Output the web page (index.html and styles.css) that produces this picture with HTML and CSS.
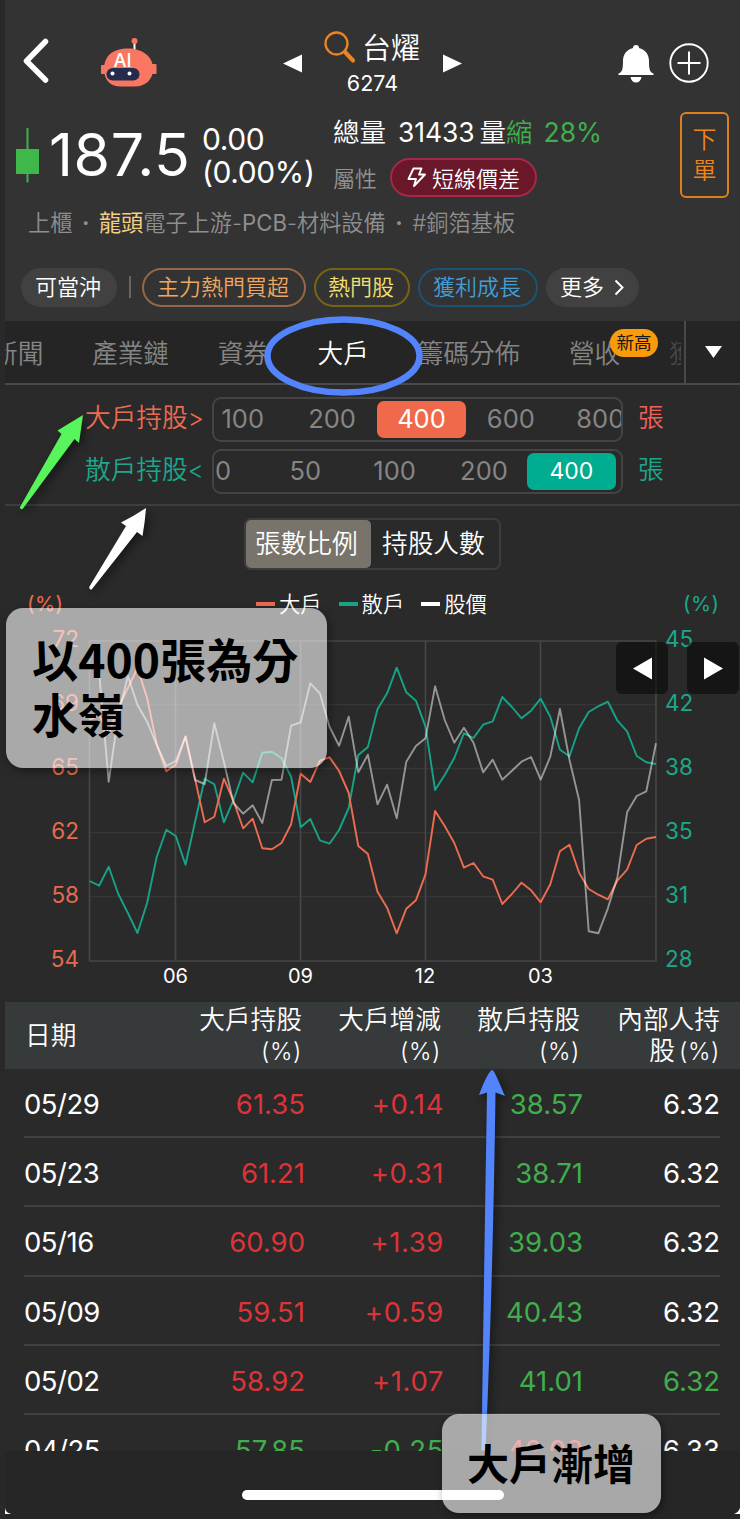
FILE: index.html
```
<!DOCTYPE html>
<html lang="zh-Hant">
<head>
<meta charset="utf-8">
<title>台燿 6274</title>
<link rel="stylesheet" href="styles.css">
</head>
<body>
<div class="screen">
  <header class="top">
    <nav class="topbar">
      <svg class="back" width="27" height="45" viewBox="0 0 27 45"><path d="M22.500 3.500 3.500 23 22.500 42" fill="none" stroke="#fff" stroke-width="5.500" stroke-linecap="round" stroke-linejoin="round"/></svg>
      <svg class="robot" width="56" height="50" viewBox="0 0 56 50">
        <path d="M33.500 3v9" stroke="#fff" stroke-width="2"/><circle cx="33.500" cy="3" r="3" fill="#f97762"/>
        <rect x="0" y="27" width="5" height="9" rx="1" fill="#f97762"/><rect x="50" y="26" width="5.500" height="10" rx="1" fill="#f97762"/>
        <path d="M3 31C3 17 13 10.500 27 10.500S52 18 52 31c0 11-8 17.500-18 17.500H20C10 48.500 3 43 3 31Z" fill="#f97762"/>
        <rect x="5.500" y="30" width="33" height="12.500" rx="6.200" fill="#252b4d"/><circle cx="11.500" cy="35.500" r="2" fill="#fff"/><circle cx="28.500" cy="35.500" r="2" fill="#fff"/>
        <text x="12.500" y="29" class="robot-ai">AI</text>
      </svg>
      <svg class="prev" width="19" height="19" viewBox="0 0 19 19"><path d="M0 9.500 19 .5v18Z" fill="#fff"/></svg>
      <div class="title">
        <div class="title-name"><svg width="32" height="33" viewBox="0 0 32 33"><circle cx="12.500" cy="12.500" r="11" fill="none" stroke="#ee8420" stroke-width="2.300"/><path d="m21 21 8 8.500" stroke="#ee8420" stroke-width="4.200" stroke-linecap="round"/></svg><span>台燿</span></div>
        <div class="title-code">6274</div>
      </div>
      <svg class="next" width="19" height="19" viewBox="0 0 19 19"><path d="M19 9.500 0 .5v18Z" fill="#fff"/></svg>
      <svg class="bell" width="36" height="40" viewBox="0 0 36 40"><path d="M15 4a3 3 0 0 1 6 0c6 1.500 10 6 10 13 0 7 .5 11.500 4.500 12.500V31H.5v-1.500C4.500 28.500 5 24 5 17 5 10 9 5.500 15 4ZM12.500 33h11c-.5 3.500-2.500 5.500-5.500 5.500s-5-2-5.500-5.500Z" fill="#fff"/></svg>
      <svg class="plus" width="40" height="40" viewBox="0 0 40 40"><circle cx="20" cy="20" r="18.700" fill="none" stroke="#fff" stroke-width="1.900"/><path d="M8.500 20h23M20 8.500v23" stroke="#fff" stroke-width="2"/></svg>
    </nav>
    <section class="quote">
      <svg class="candle" width="23" height="55" viewBox="0 0 23 55"><path d="M11.500 0v54.500" stroke="#3fb34b" stroke-width="2"/><path d="M0 21h23v25H0Z" fill="#3fb74b"/></svg>
      <div class="price">187.5</div>
      <div class="change"><div>0.00</div><div>(0.00%)</div></div>
      <div class="volume">
        <div class="volume-line"><span>總量</span><span class="vol-num">31433</span><span>量</span><span class="green">縮</span><span class="vol-pct green">28%</span></div>
        <div class="attr"><span class="attr-label">屬性</span><span class="attr-pill"><svg width="20" height="21" viewBox="0 0 20 21"><path d="M6.500 1.500h8l-2.500 6h6L7 19l2-7H1.500Z" fill="none" stroke="#fff" stroke-width="1.900" stroke-linejoin="round"/></svg>短線價差</span></div>
      </div>
      <button class="order"><span>下</span><span>單</span></button>
    </section>
    <div class="industry">上櫃<i>·</i><b>龍頭</b>電子上游-<span class="latin">PCB</span>-材料設備<i>·</i>#銅箔基板</div>
    <div class="tags">
      <span class="tag solid w96">可當沖</span><span class="bar"></span>
      <span class="tag orange">主力熱門買超</span><span class="tag yellow">熱門股</span><span class="tag blue">獲利成長</span>
      <span class="tag solid more">更多<svg width="10" height="17" viewBox="0 0 10 17"><path d="m1.500 1.500 7 7-7 7" fill="none" stroke="#fff" stroke-width="2"/></svg></span>
    </div>
  </header>

  <nav class="tabs">
    <div class="tab-scroll"><span>新聞</span><span>產業鏈</span><span>資券</span><span class="on">大戶</span><span>籌碼分佈</span><span class="has-badge">營收<em>新高</em></span><span class="faded">獲</span></div>
    <div class="tab-more"><svg width="17" height="12" viewBox="0 0 17 12"><path d="M0 0h17L8.500 12Z" fill="#fff"/></svg></div>
  </nav>

  <section class="filters">
    <div class="filter"><span class="filter-label big">大戶持股<i>&gt;</i></span><div class="options first"><span>100</span><span>200</span><span class="sel big-bg">400</span><span>600</span><span>800</span></div><span class="unit red">張</span></div>
    <div class="filter"><span class="filter-label teal">散戶持股<i>&lt;</i></span><div class="options second"><span>10</span><span>50</span><span>100</span><span>200</span><span class="sel teal-bg">400</span></div><span class="unit teal">張</span></div>
  </section>

  <section class="chart">
    <div class="toggle"><span class="active">張數比例</span><span>持股人數</span></div>
    <div class="legend"><span class="pct big">(%)</span><div class="keys"><span class="key k-big">大戶</span><span class="key k-small">散戶</span><span class="key k-price">股價</span></div><span class="pct teal">(%)</span></div>
    <svg class="plot" width="735" height="382" viewBox="5 620 735 382">
      <g class="grid">
        <path d="M89.500 704.500H656M89.500 768.500H656M89.500 832.500H656M89.500 896.500H656" class="minor"/>
        <path d="M89.500 641H656V961H89.500ZM175.500 641V961M300.500 641V961M425.500 641V961M540.500 641V961"/>
      </g>
      <g class="axis-big"><text x="79" y="646.500">72</text><text x="79" y="710.500">69</text><text x="79" y="774.500">65</text><text x="79" y="838.500">62</text><text x="79" y="902.500">58</text><text x="79" y="966.500">54</text></g>
      <g class="axis-small"><text x="665" y="646.500">45</text><text x="665" y="710.500">42</text><text x="665" y="774.500">38</text><text x="665" y="838.500">35</text><text x="665" y="902.500">31</text><text x="665" y="966.500">28</text></g>
      <g class="axis-x"><text x="175.500" y="982.500">06</text><text x="300.500" y="982.500">09</text><text x="425" y="982.500">12</text><text x="540.500" y="982.500">03</text></g>
      <g fill="none" stroke-width="1.900" stroke-linejoin="round">
        <polyline stroke="#17a387" points="89.500,881 99.100,885.700 108.700,866.700 118.300,894 127.900,913 137.500,933 147.100,903 156.700,857 166.300,829.700 175.900,836.300 185.500,864.700 195.100,821.700 204.700,778.700 214.300,784.300 223.900,822.300 233.500,800 243.100,772.700 252.700,782.300 262.300,752.700 271.900,751.700 281.500,758 291.100,776.700 300.700,827.300 310.300,819 319.900,840.300 329.500,843.700 339.100,830 348.700,808 358.300,755 367.900,747 377.500,709.300 387.100,693.300 396.700,667.700 406.300,692.300 415.900,700.700 425.500,726.700 435.100,790 444.700,775 454.300,758 463.900,733.300 473.500,738 483.100,724.700 492.700,721.300 502.300,697 511.900,707 521.500,718.300 531.100,710.700 540.700,698.700 550.300,716.700 559.900,749.700 569.500,756.300 579.100,728.300 588.700,712 598.300,706.300 607.900,701.700 617.500,720.700 627.100,731.300 636.700,756 646.300,762.300 656,764"/>
        <polyline stroke="#ec6c50" transform="matrix(1 0 0 -1 0 1601)" points="89.500,881 99.100,885.700 108.700,866.700 118.300,894 127.900,913 137.500,933 147.100,903 156.700,857 166.300,829.700 175.900,836.300 185.500,864.700 195.100,821.700 204.700,778.700 214.300,784.300 223.900,822.300 233.500,800 243.100,772.700 252.700,782.300 262.300,752.700 271.900,751.700 281.500,758 291.100,776.700 300.700,827.300 310.300,819 319.900,840.300 329.500,843.700 339.100,830 348.700,808 358.300,755 367.900,747 377.500,709.300 387.100,693.300 396.700,667.700 406.300,692.300 415.900,700.700 425.500,726.700 435.100,790 444.700,775 454.300,758 463.900,733.300 473.500,738 483.100,724.700 492.700,721.300 502.300,697 511.900,707 521.500,718.300 531.100,710.700 540.700,698.700 550.300,716.700 559.900,749.700 569.500,756.300 579.100,728.300 588.700,712 598.300,706.300 607.900,701.700 617.500,720.700 627.100,731.300 636.700,756 646.300,762.300 656,764"/>
        <polyline stroke="#fff" stroke-opacity=".5" points="89.500,665 99.100,672 108.700,781.700 118.300,715 127.900,676 137.500,705 147.100,721.700 156.700,745 166.300,766 175.900,761 185.500,736.700 195.100,780 204.700,784 214.300,723.300 223.900,762 233.500,803 243.100,813.700 252.700,805.300 262.300,823 271.900,780 281.500,779.700 291.100,725.700 300.700,722.300 310.300,683.300 319.900,693.300 329.500,726.700 339.100,745.700 348.700,716.700 358.300,772.300 367.900,754.700 377.500,804.300 387.100,784.700 396.700,818.300 406.300,761.700 415.900,746 425.500,738.300 435.100,686.300 444.700,720 454.300,742.700 463.900,727.700 473.500,742.700 483.100,772.300 492.700,759.700 502.300,779.700 511.900,770.700 521.500,761.700 531.100,757 540.700,779.700 550.300,756.700 559.900,709 569.500,760 579.100,800 588.700,931.300 598.300,933.300 607.900,908.300 617.500,876.700 627.100,812.300 636.700,796 646.300,791.300 656,743.300"/>
      </g>
    </svg>
    <div class="pan"><span><svg width="19" height="23" viewBox="0 0 19 23"><path d="M0 11.500 19 .5v22Z" fill="#fff"/></svg></span><span><svg width="19" height="23" viewBox="0 0 19 23"><path d="M19 11.500 0 .5v22Z" fill="#fff"/></svg></span></div>
  </section>

  <section class="table">
    <div class="thead"><span class="date">日期</span><span>大戶持股<br><u>(%)</u></span><span>大戶增減<br><u>(%)</u></span><span>散戶持股<br><u>(%)</u></span><span>內部人持<br>股<u>(%)</u></span></div>
    <div class="rows">
      <div class="row"><span>05/29</span><span class="up">61.35</span><span class="up">+0.14</span><span class="down">38.57</span><span>6.32</span></div>
      <div class="row"><span>05/23</span><span class="up">61.21</span><span class="up">+0.31</span><span class="down">38.71</span><span>6.32</span></div>
      <div class="row"><span>05/16</span><span class="up">60.90</span><span class="up">+1.39</span><span class="down">39.03</span><span>6.32</span></div>
      <div class="row"><span>05/09</span><span class="up">59.51</span><span class="up">+0.59</span><span class="down">40.43</span><span>6.32</span></div>
      <div class="row"><span>05/02</span><span class="up">58.92</span><span class="up">+1.07</span><span class="down">41.01</span><span class="down">6.32</span></div>
      <div class="row"><span>04/25</span><span class="down">57.85</span><span class="down">-0.25</span><span class="up">42.08</span><span>6.33</span></div>
    </div>
  </section>
  <footer class="home"><span></span></footer>
</div>

<svg class="marks" width="740" height="1519" viewBox="0 0 740 1519">
  <ellipse cx="343.500" cy="356" rx="76" ry="36.500" fill="none" stroke="#5384fb" stroke-width="6.500"/>
  <path class="mark" d="M20 507 61.500 434 57.500 430.500 83 415 79 443 74.500 439 23 508.500C22 510 19.500 509 20 507Z" fill="#57f45b"/>
  <path class="mark" d="M89.500 586.500 126 526 121 522.500Q134 516 146 508Q145 522 142.500 536L137 532 92 589C91 590.500 88.500 588.500 89.500 586.500Z" fill="#fff"/>
  <path class="mark" d="M492 1070C494 1070 497 1077 505 1096L495.500 1092.500Q493 1280 485.500 1450.500H481.500Q484 1270 487 1092.500L479 1095C485 1079 490 1070 492 1070Z" fill="#5384fb"/>
  <path d="M5 1508V1514H11.500C8 1513.500 5.500 1511.500 5 1508ZM740 1508V1514H734C737 1513 739 1511 740 1508Z" fill="#fff"/>
</svg>
<div class="note note-a">以400張為分<br>水嶺</div>
<div class="note note-b">大戶漸增</div>
</body>
</html>
```
FILE: styles.css
```
* { box-sizing: border-box; }
body { margin: 0; width: 740px; height: 1519px; position: relative; overflow: hidden; background: #292929; color: #fff; font-family: Inter, "Noto Sans CJK TC", sans-serif; font-weight: 350; white-space: nowrap; }
svg { display: block; flex: none; }
i, em, b, u { font-style: normal; text-decoration: none; }
.screen { margin-left: 5px; width: 735px; height: 1519px; background: #2a2a2a; overflow: hidden; }
.green { color: #3fae4c; }
.big { color: #ee6b4f; }
.teal { color: #1ca78b; }
.red { color: #f06059; }

.top { height: 321px; background: #333; }
.topbar { height: 110px; display: flex; align-items: flex-start; }
.back { margin: 38px 0 0 18px; }
.robot { margin: 38px 0 0 51px; overflow: visible; }
.robot-ai { fill: #fff; font: 500 18.500px Inter, sans-serif; }
.prev { margin: 54px 0 0 126px; }
.title { width: 97px; margin: 28px 0 0 22px; }
.title-name { display: flex; align-items: center; height: 40px; gap: 6px; font-size: 29px; }
.title-name svg { margin-top: -2px; }
.title-name span { margin-top: -4px; }
.title-code { font-size: 21.500px; font-weight: 400; text-align: center; line-height: 30px; }
.next { margin: 54px 0 0 22px; }
.bell { margin: 44px 0 0 156px; }
.plus { margin: 43px 0 0 15px; }

.quote { height: 95px; display: flex; align-items: flex-start; }
.quote > * { flex: none; }
.candle { margin: 18px 0 0 11px; }
.price { width: 157px; padding-left: 10px; font-size: 59px; font-weight: 400; line-height: 90px; letter-spacing: .6px; }
.change { width: 137px; padding: 13px 0 0 6px; font-size: 30px; font-weight: 400; line-height: 33px; letter-spacing: -.4px; }
.volume { width: 347px; padding-top: 3px; }
.volume-line { height: 40px; line-height: 39px; display: flex; font-size: 26.500px; }
.vol-num { margin: 0 5px 0 12px; font-weight: 400; font-size: 26.500px; letter-spacing: -.1px; }
.vol-pct { margin-left: 11px; font-weight: 400; font-size: 26.500px; }
.attr { display: flex; align-items: center; height: 48px; font-size: 22px; }
.attr-label { width: 57px; color: #919191; }
.attr-pill { display: flex; align-items: center; gap: 5px; width: 147px; height: 39px; padding-left: 15px; border: 2px solid #a42848; border-radius: 20px; background: #6a1729; }
.order { width: 49px; height: 86px; margin: 2px 0 0 0; padding: 0; border: 2px solid #dc801f; border-radius: 6px; background: none; color: #f08318; font: inherit; font-size: 24px; line-height: 31px; display: flex; flex-direction: column; justify-content: center; align-items: center; }
.industry { height: 36px; padding-left: 23px; line-height: 36px; font-size: 22.200px; color: #8f8f8f; }
.industry i { display: inline-block; width: 26.500px; text-align: center; font-weight: 700; }
.industry b { color: #f2cf84; font-weight: 400; }
.industry .latin { font-weight: 400; }
.tags { display: flex; align-items: center; gap: 8px; height: 92px; padding-left: 16px; font-size: 22px; }
.tag { height: 39px; line-height: 35px; padding: 0 13px; border: 2px solid; border-radius: 20px; }
.solid { background: #414141; border-color: #414141; }
.w96 { width: 96px; padding: 0 12px; }
.bar { width: 2px; height: 22px; background: #666; margin: 0 3px 0 4px; }
.orange { width: 164px; border-color: #936747; color: #f0a65f; }
.yellow { width: 96px; padding: 0 12px; border-color: #75650f; color: #f3e06c; }
.blue { width: 120px; border-color: #1b5377; color: #439ed6; }
.more { display: flex; align-items: center; gap: 10px; width: 93px; padding: 0 12px; }

.tabs { height: 64px; display: flex; background: #252525; border-bottom: 2px solid #494949; font-size: 25.700px; color: #858585; }
.tab-scroll { width: 679px; display: flex; gap: 48.600px; overflow: hidden; line-height: 66px; }
.tab-scroll > span { flex: none; }
.tab-scroll > span:first-child { margin-left: -13px; }
.tab-scroll .on { color: #fff; }
.has-badge { position: relative; }
.has-badge em { position: absolute; left: 41px; top: 8px; width: 48px; height: 28px; line-height: 28px; border-radius: 14px; text-align: center; background: #f99b0b; color: #171717; font-size: 17.500px; font-weight: 400; }
.faded { width: 12px; overflow: hidden; opacity: .35; }
.tab-more { width: 56px; border-left: 2px solid #494949; display: flex; align-items: center; justify-content: center; }

.filters { height: 121px; padding-top: 11.500px; display: flex; flex-direction: column; gap: 7px; border-bottom: 2px solid #3d3d3d; font-size: 25.700px; }
.filter { height: 45px; display: flex; align-items: center; }
.filter-label, .unit { line-height: 38px; padding-bottom: 3px; }
.filter-label { width: 207px; padding-left: 80px; }
.filter-label i { display: inline-block; font-size: 24.500px; }
.options { width: 411px; height: 45px; border: 2px solid #444; border-radius: 9px; display: flex; align-items: center; overflow: hidden; color: #858585; font-size: 25.500px; font-weight: 400; }
.options span { flex: none; width: 89.400px; height: 37px; line-height: 36px; text-align: center; }
.options.first span:first-child { margin-left: -16px; }
.options.second span:first-child { margin-left: -39px; width: 85.500px; }
.options .sel { color: #fff; border-radius: 7px; }
.options .teal-bg { background: #00ad90; font-size: 23px; margin-left: -2px; }
.big-bg { background: #f0694b; }
.unit { margin-left: 15px; }

.chart { height: 496px; padding-top: 11.500px; position: relative; }
.toggle { width: 257px; height: 52px; margin-left: 239px; display: flex; border: 2px solid #3d3c3a; border-radius: 7px; font-size: 25.700px; line-height: 47px; }
.toggle span { flex: 1; padding-left: 11px; }
.toggle .active { flex: none; width: 125px; padding-left: 9px; background: #78746c; border-radius: 5px; }
.legend { height: 50px; padding-top: 19px; display: flex; font-size: 21.300px; line-height: 30px; }
.pct { flex: none; width: 229px; margin-left: 22px; font-weight: 400; font-size: 20.500px; letter-spacing: .4px; }
.pct.teal { width: 50px; margin-left: 0; }
.keys { flex: none; display: flex; gap: 17px; width: 427px; }
.key { display: flex; align-items: center; gap: 4px; }
.key::before { content: ""; width: 19px; height: 4px; background: #fff; }
.k-big::before { background: #ec6c50; }
.k-small::before { background: #17a387; }
.plot { display: block; }
.grid { fill: none; stroke: #474747; stroke-width: 1.600; }
.grid .minor { stroke: #363636; }
.axis-big, .axis-small { font: 400 22.500px Inter, sans-serif; }
.axis-big { fill: #e56b50; text-anchor: end; }
.axis-small { fill: #1ca78b; }
.axis-x { fill: #fff; font: 400 20px Inter, sans-serif; text-anchor: middle; }
.pan { position: absolute; left: 611px; top: 136px; display: flex; gap: 19px; }
.pan span { width: 52px; height: 52px; border-radius: 6px; background: rgba(0,0,0,.5); display: flex; align-items: center; justify-content: center; }

.table { height: 449px; overflow: hidden; }
.thead, .row { display: grid; grid-template-columns: 160px 139px 139px 139px 138px; }
.thead { height: 67px; background: #373a3b; align-items: center; line-height: 31px; font-size: 25.700px; text-align: right; padding-left: 18px; }
.thead .date { text-align: left; padding-left: 2px; }
.thead u { font-size: 24px; letter-spacing: .6px; margin-left: 4px; }
.thead > span { padding-right: 20px; }
.thead > span:last-child { padding-right: 18px; }
.row { height: 69.200px; line-height: 70px; font-size: 27.500px; font-weight: 400; text-align: right; width: 715px; background: linear-gradient(#404040, #404040) 19px 100% / 697px 2px no-repeat; }
.row span:first-child { text-align: left; padding-left: 19px; letter-spacing: -.5px; }
.row span:nth-child(2), .row span:nth-child(4) { padding-right: 0; margin-right: -1px; }
.row span:nth-child(3) { letter-spacing: .6px; margin-right: -1px; }
.up { color: #dc3438; }
.down { color: #40ae4d; }
.home { height: 68px; background: #262626; padding: 39px 0 0 237px; }
.home span { display: block; width: 262px; height: 10px; border-radius: 5px; background: #fff; }

.marks { position: absolute; left: 0; top: 0; }
.mark { filter: drop-shadow(3px 4px 4px rgba(0,0,0,.45)); }
.note { position: absolute; border-radius: 17px; background: rgba(255,255,255,.6); box-shadow: 2px 3px 8px rgba(0,0,0,.4); color: #000; font-family: "Noto Sans CJK TC", sans-serif; font-weight: 700; }
.note-a { left: 6px; top: 608px; width: 321px; height: 160px; padding: 22px 0 0 26px; font-size: 46.200px; line-height: 55px; }
.note-b { left: 442px; top: 1414px; width: 219px; height: 99px; padding-left: 25px; font-size: 42px; line-height: 96px; }
```
